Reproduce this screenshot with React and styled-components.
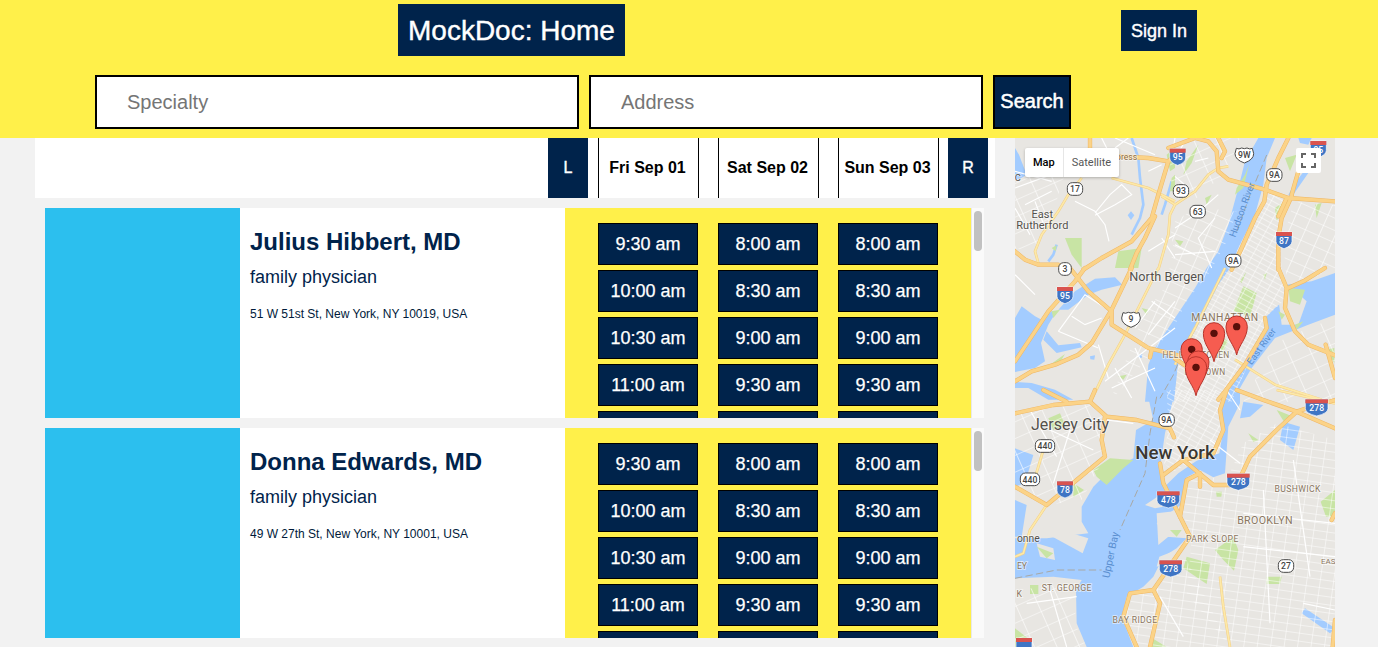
import React from 'react';
import styled, { createGlobalStyle } from 'styled-components';

const YELLOW = '#fff04a';
const NAVY = '#00234b';

const GlobalStyle = createGlobalStyle`
  html, body {
    margin: 0;
    height: 100%;
    overflow: hidden;
    background: #f2f2f2;
    font-family: "Liberation Sans", Arial, sans-serif;
  }
  * { box-sizing: border-box; }
`;

const Header = styled.header`
  background: ${YELLOW};
  height: 138px;
`;

const TitleRow = styled.div`
  display: flex;
  align-items: flex-start;
  padding-left: 398px;
`;

const Title = styled.h1`
  margin: 4px 0 0;
  height: 52px;
  background: ${NAVY};
  color: #fff;
  font-size: 28px;
  font-weight: 400;
  line-height: 54px;
  padding: 0 10px;
  -webkit-text-stroke: 0.4px #fff;
`;

const SignIn = styled.button`
  margin: 10px 0 0 496px;
  width: 76px;
  height: 41px;
  padding: 2px 0 0;
  border: 0;
  background: ${NAVY};
  color: #fff;
  font: 18px "Liberation Sans", Arial, sans-serif;
  -webkit-text-stroke: 0.4px #fff;
`;

const SearchRow = styled.form`
  display: flex;
  gap: 10px;
  margin-top: 19px;
  padding-left: 95px;
`;

const SearchInput = styled.input`
  width: ${(p) => p.$width}px;
  height: 54px;
  border: 2px solid #000;
  background: #fff;
  padding: 0 30px;
  font: 20px "Liberation Sans", Arial, sans-serif;
  &::placeholder { color: #757575; opacity: 1; }
`;

const SearchButton = styled.button`
  width: 78px;
  height: 54px;
  padding: 0 0 2px;
  border: 2px solid #000;
  background: ${NAVY};
  color: #fff;
  font: 20px "Liberation Sans", Arial, sans-serif;
  -webkit-text-stroke: 0.5px #fff;
`;

const Body = styled.main`
  display: flex;
  align-items: flex-start;
  padding-left: 35px;
`;

const Results = styled.section`
  width: 960px;
`;

const DateBar = styled.div`
  display: flex;
  justify-content: flex-end;
  height: 60px;
  padding-right: 7px;
  background: #fff;
`;

const ArrowButton = styled.button`
  width: 40px;
  padding: 0;
  border: 0;
  background: ${NAVY};
  color: #fff;
  font: 16px "Liberation Sans", Arial, sans-serif;
  -webkit-text-stroke: 0.4px #fff;
`;

const DateColumns = styled.div`
  display: flex;
  gap: 19px;
  margin: 0 9px 0 10px;
`;

const DateCell = styled.div`
  width: 101px;
  display: flex;
  align-items: center;
  justify-content: center;
  padding-right: 2px;
  border-left: 1px solid #000;
  border-right: 1px solid #000;
  font-size: 16px;
  font-weight: 700;
  color: #000;
`;

const Card = styled.article`
  display: flex;
  width: 939px;
  height: 210px;
  margin: 10px 0 0 10px;
`;

const Photo = styled.div`
  width: 195px;
  background: #2cbfee;
`;

const Info = styled.div`
  width: 325px;
  background: #fff;
  padding: 20px 10px 0;
  color: ${NAVY};
`;

const Name = styled.h2`
  margin: 0;
  font-size: 24px;
  line-height: 28px;
`;

const Specialty = styled.p`
  margin: 11px 0 0;
  font-size: 18px;
  line-height: 21px;
`;

const Address = styled.p`
  margin: 19px 0 0;
  font-size: 12px;
  line-height: 14px;
  color: #001a3a;
`;

const Slots = styled.div`
  width: 406px;
  overflow: hidden;
  background: ${YELLOW};
`;

const SlotGrid = styled.div`
  display: grid;
  grid-template-columns: repeat(3, 100px);
  column-gap: 20px;
  row-gap: 5px;
  padding: 15px 33px;
`;

const Slot = styled.button`
  height: 42px;
  padding: 0;
  border: 1px solid #000;
  background: ${NAVY};
  color: #fff;
  font: 18px "Liberation Sans", Arial, sans-serif;
  -webkit-text-stroke: 0.25px #fff;
`;

const ScrollTrack = styled.div`
  width: 13px;
  padding: 3px 2px 0 2px;
  background: #fafafa;
  border-left: 1px solid #e8e8e8;
`;

const ScrollThumb = styled.div`
  height: 40px;
  background: #c1c1c1;
  border-radius: 4px;
`;

const MapFrame = styled.aside`
  position: relative;
  flex: none;
  width: 320px;
  height: 509px;
  margin-left: 20px;
  overflow: hidden;
  background: #e8e6e2;
`;

const MapCanvas = styled.svg`
  display: block;
  width: 320px;
  height: 509px;
`;

const MapType = styled.div`
  position: absolute;
  top: 10px;
  left: 10px;
  display: flex;
  height: 29px;
  background: #fff;
  border-radius: 2px;
  box-shadow: 0 1px 3px rgba(0, 0, 0, 0.25);
  font: 11px Roboto, sans-serif;
`;

const MapTypeOption = styled.div`
  display: flex;
  align-items: center;
  padding: 0 8px;
  color: ${(p) => (p.$active ? '#000' : '#565656')};
  font-weight: ${(p) => (p.$active ? 500 : 400)};
  & + & { border-left: 1px solid #e6e6e6; }
`;

const Fullscreen = styled.div`
  position: absolute;
  top: 10px;
  right: 14px;
  width: 25px;
  height: 25px;
  display: flex;
  align-items: center;
  justify-content: center;
  background: #fff;
  border-radius: 2px;
`;

const MapLabel = styled.text`
  font-family: Roboto, sans-serif;
  font-size: ${(p) => p.$size}px;
  font-weight: ${(p) => p.$weight || 400};
  letter-spacing: ${(p) => p.$track || 0}px;
  fill: ${(p) => p.$color || '#54514c'};
  stroke: ${(p) => (p.$halo === false ? 'none' : 'rgba(255,255,255,0.6)')};
  stroke-width: 5px;
  paint-order: stroke;
  text-anchor: middle;
`;

const ShieldText = styled.text`
  font-family: Roboto, sans-serif;
  font-size: ${(p) => p.$size}px;
  font-weight: 500;
  fill: ${(p) => p.$color};
  text-anchor: middle;
`;

// the map is drawn at 3x, each sheet holds the points as read off one part of it
const OFFSETS = {
  top: [-15, -9],
  nw: [0, 0],
  ne: [480, 0],
  sw: [0, 390],
  se: [480, 390],
  bottom: [-15, 756],
};

const WATER = {
  top: [
    'M745 9 L795 9 L770 69 L760 149 L735 239 L685 339 L660 399 L625 449 L565 569 L505 679 L492 800 L405 800 L415 689 L435 639 L455 609 L495 549 L555 459 L590 399 L625 349 L655 269 L685 159 L705 79 Z',
    'M830 449 L905 439 L975 414 L975 539 L895 569 L795 609 L725 699 L690 759 L665 800 L640 800 L680 719 L745 619 L770 589 L765 549 L795 519 L825 494 Z',
  ],
  ne: ['M390 95 L400 105 L365 155 L350 178 L340 170 L360 135 Z', 'M370 0 L410 0 L400 20 L375 15 Z'],
  nw: ['M0 30 L12 50 L35 110 L10 125 L0 120 Z', 'M348 220 L358 232 L348 246 L338 232 Z'],
  sw: [
    'M0 150 L20 115 L60 145 L80 155 L110 130 L125 130 L100 170 L78 225 L90 280 L60 300 L0 312 Z',
    'M130 125 L180 70 L240 32 L300 28 L322 50 L260 65 L220 80 L160 125 Z',
    'M95 190 L130 232 L195 225 L200 238 L125 255 L85 215 Z',
    'M0 342 L50 345 L120 365 L175 395 L100 395 L40 360 L0 360 Z',
    'M225 265 L240 262 L238 275 L226 274 Z',
    'M370 260 L382 258 L380 270 L370 268 Z',
  ],
  bottom: [
    'M410 0 L495 0 L475 90 L465 130 L452 220 L462 292 L505 250 L560 212 L628 190 L640 120 L628 60 L640 0 L690 0 L690 40 L655 110 L645 250 L610 262 L570 240 L530 262 L512 345 L470 375 L440 400 L470 440 L530 445 L500 475 L460 500 L430 560 L400 590 L350 620 L335 680 L370 771 L230 771 L200 700 L198 600 L215 570 L130 560 L15 565 L15 445 L110 445 L235 430 L215 395 L215 350 L250 290 L300 240 L370 205 L378 120 L430 90 Z',
    'M15 175 L70 195 L45 280 L15 290 Z',
    'M15 330 L50 345 L35 440 L15 440 Z',
    'M700 35 L760 45 L720 80 L690 85 Z',
    'M820 95 L870 110 L850 180 L810 150 Z',
    'M885 655 L975 715 L960 730 L875 670 Z',
  ],
};

const RIVERS = {
  nw: ['M350 0 L370 60 L375 120 L385 200 L375 240 L350 290', 'M470 130 L450 200 L440 230', 'M125 320 L115 350 L100 370'],
};

const LAND_OVER_WATER = {
  se: ['M310 90 L350 60 L395 100 L370 170 L320 170 Z'],
  bottom: [
    'M405 345 L465 305 L510 312 L490 345 L435 355 Z',
    'M440 370 L505 362 L530 430 L475 440 L445 465 Z',
    'M102 405 L235 445 L218 490 L100 425 Z',
    'M80 460 L130 475 L135 510 L90 500 Z',
    'M448 500 L500 480 L470 520 L440 530 Z',
  ],
};

const PARKS = {
  nw: [
    'M310 340 L380 330 L370 390 L300 390 Z',
    'M150 300 L200 300 L200 390 L170 350 Z',
    'M455 50 L480 30 L480 90 L465 100 Z',
    'M470 120 L480 110 L480 160 L465 160 Z',
    'M110 330 L125 322 L122 340 Z',
  ],
  ne: [
    'M35 70 L70 20 L50 75 L25 110 Z',
    'M185 150 L210 110 L222 80 L205 150 L180 170 Z',
    'M90 180 L110 170 L95 200 Z',
    'M420 200 L440 195 L425 240 Z',
    'M300 210 L330 190 L305 250 Z',
    'M330 60 L365 50 L345 100 Z',
    'M0 305 L25 310 L15 325 Z',
  ],
  sw: ['M105 290 L150 258 L130 292 Z', 'M310 325 L335 320 L325 335 Z', 'M380 120 L400 125 L395 140 Z', 'M110 130 L135 125 L115 150 Z'],
  se: [
    'M185 105 L205 55 L245 75 L225 145 L175 130 Z',
    'M130 200 L160 220 L140 260 Z',
    'M265 20 L275 15 L270 35 Z',
    'M195 40 L215 10 L200 45 Z',
    'M310 130 L330 140 L320 155 Z',
    'M340 60 L390 65 L375 110 L345 100 Z',
    'M360 170 L385 160 L365 185 Z',
    'M450 245 L478 240 L478 285 Z',
  ],
  bottom: [
    'M250 240 L300 205 L370 210 L340 235 L290 285 L260 260 Z',
    'M530 500 L600 520 L590 582 L520 535 Z',
    'M615 480 L670 440 L685 480 L672 542 L640 510 Z',
    'M715 130 L745 150 L730 156 Z',
    'M800 60 L850 80 L820 92 Z',
    'M770 560 L815 560 L810 582 L770 582 Z',
    'M932 335 L975 300 L975 380 L948 380 Z',
    'M480 420 L515 420 L500 440 Z',
    'M60 585 L85 585 L85 612 L60 612 Z',
    'M15 715 L60 750 L20 771 L15 771 Z',
    'M115 85 L150 70 L165 105 L130 120 Z',
    'M190 280 L222 300 L190 322 Z',
    'M420 740 L470 771 L420 771 Z',
    'M80 470 L130 490 L110 505 Z',
    'M618 305 L636 305 L634 320 L620 320 Z',
  ],
};

const GRIDS = {
  top: [
    ['M770 170 L735 239 L685 339 L625 449 L565 569 L505 679 L492 800 L665 800 L745 619 L770 589 L765 549 L825 494 L812 370 L818 190 Z', 'url(#gridManhattan)'],
    ['M850 200 L975 210 L975 400 L905 430 L830 440 L820 320 Z', 'url(#gridBronx)'],
    ['M700 800 L795 625 L895 580 L975 550 L975 800 Z', 'url(#gridLoose)'],
    ['M300 800 L440 640 L500 560 L530 500 L600 410 L650 320 L680 230 L560 215 L480 270 L490 340 L470 450 L400 540 Z', 'url(#gridBronx)'],
    ['M15 130 L170 100 L120 260 L70 350 L15 340 Z', 'url(#gridLoose)'],
    ['M500 10 L690 10 L650 110 L560 190 L470 130 Z', 'url(#gridLoose)'],
  ],
  bottom: [
    ['M470 0 L640 0 L625 190 L555 212 L490 245 L462 220 L475 100 Z', 'url(#gridManhattan)'],
    ['M540 250 L650 270 L700 160 L800 100 L975 150 L975 771 L660 771 L530 610 L545 450 L515 360 Z', 'url(#gridBrooklyn)'],
    ['M15 60 L270 40 L290 190 L215 330 L110 345 L15 290 Z', 'url(#gridLoose)'],
    ['M375 610 L435 600 L525 500 L660 771 L380 771 L340 680 Z', 'url(#gridBrooklyn)'],
    ['M15 600 L200 580 L195 700 L230 771 L15 771 Z', 'url(#gridLoose)'],
  ],
};

const STREETS = {
  nw: [
    'M180 190 L240 220 L270 260 L282 310',
    'M240 225 L285 170 L320 140 L350 170 L300 200 L240 232',
    'M0 100 L110 130',
    'M0 150 L150 95',
    'M30 200 L110 160',
    'M0 210 L45 290',
    'M60 190 L90 270',
    'M300 0 L420 50',
    'M260 0 L290 60',
    'M400 100 L440 80',
    'M300 30 L340 0',
    'M440 300 L480 360',
    'M400 340 L480 290',
    'M470 60 L480 0',
  ],
  ne: ['M0 270 L60 230 L130 170', 'M0 320 L60 350', 'M30 10 L0 60', 'M60 70 L100 60', 'M0 115 L40 150', 'M120 240 L70 300 L110 390', 'M0 350 L120 340'],
  sw: [
    'M130 190 L210 80 L280 125',
    'M170 145 L210 170 L260 150',
    'M130 190 L250 240',
    'M250 230 L280 330',
    'M270 340 L480 180',
    'M300 300 L350 390',
    'M360 240 L420 370',
    'M410 100 L480 150',
    'M420 100 L360 180',
    'M0 20 L60 80',
    'M290 360 L420 300',
    'M400 200 L480 100',
  ],
  bottom: [
    'M120 120 L250 180',
    'M60 60 L140 200',
    'M180 120 L130 280',
    'M290 90 L370 100',
    'M700 370 L975 400',
    'M975 500 L700 470',
    'M760 300 L780 700',
    'M850 210 L900 560',
    'M450 620 L520 740',
    'M50 640 L200 620',
    'M120 600 L170 771',
    'M650 0 L690 60',
    'M600 150 L690 220',
    'M880 640 L975 660',
  ],
};

const MAJOR_ROADS = {
  nw: [
    'M310 55 L400 60 L460 70 L480 50',
    'M460 70 L430 170 L410 240 L350 310 L260 360 L205 395',
    'M420 235 L390 300 L365 345 L345 395',
    'M0 340 L30 365 L70 380 L130 380 L165 395',
    'M225 0 L225 30',
  ],
  ne: [
    'M-20 30 L60 0 L100 10 L125 40 L130 100 L160 125 L270 155 L340 180 L480 190',
    'M340 0 L310 60 L275 140 L268 190 L240 240 L200 330 L170 395',
    'M350 175 L320 240 L310 300 L310 395',
    'M335 180 L310 235',
    'M370 100 L350 170',
    'M130 0 L150 40 L140 60',
  ],
  sw: [
    'M0 340 L50 310 L120 290 L190 260 L230 225 L290 125 L350 0',
    'M0 280 L60 190 L100 130 L180 40 L210 0',
    'M165 0 L220 70 L290 130 L290 170 L400 240 L490 262',
    'M405 268 L410 245',
  ],
  se: [
    'M310 0 L335 60 L330 120 L360 190 L400 230 L480 262',
    'M340 60 L385 40 L450 0',
    'M452 230 L480 330',
    'M270 150 L275 180 L210 290 L150 370 L130 395',
    'M0 272 L30 292',
  ],
  bottom: [
    'M15 70 L130 45 L240 35 L290 80 L380 90 L480 115 L492 142',
    'M100 0 L170 35 M240 35 L255 0',
    'M285 80 L275 150 L285 200 L200 270 L110 345 L15 290',
    'M650 0 L630 60 L640 120 L610 190 L520 210 L460 255',
    'M450 220 L460 280 L540 440',
    'M520 210 L580 260 L610 285 L680 285 L720 200 L800 120 L860 65 L975 115',
    'M680 0 L760 30 L860 65 L890 55 L975 30',
    'M510 380 L530 270 L570 250 L570 290',
    'M540 440 L430 600 L360 610 L340 680 L380 771',
    'M430 600 L450 640 L420 771',
    'M975 370 L965 390 M975 690 L968 771',
  ],
};

const MINOR_ROADS = {
  nw: [
    'M200 120 L160 170 L130 220 L80 290 L60 340 L70 375',
    'M290 120 L400 150 L480 190',
    'M430 395 L460 290 L465 230 L480 200',
  ],
  ne: ['M0 200 L60 160 L100 110 L130 90 L160 85', 'M-40 175 L0 200'],
  sw: ['M230 395 L280 290 L330 200 L400 60 L430 0'],
  se: ['M150 0 L100 100 L60 180 L0 290', 'M180 275 L300 350 L440 395'],
  bottom: ['M110 345 L60 420 L40 490 L15 500', 'M100 180 L70 280', 'M800 0 L975 40', 'M630 560 L640 650 L660 771'],
};

const DASHES = {
  top: ['M770 60 L720 180 L680 290', 'M540 600 L490 720 L450 790'],
  bottom: ['M440 20 L420 130 L405 250 L330 420', 'M15 565 L140 540 L275 540'],
};

const INTERSTATES = {
  top: [[503, 65, '95'], [165, 480, '95'], [822, 315, '87'], [925, 42, '95']],
  bottom: [[165, 298, '78'], [475, 328, '478'], [685, 275, '278'], [482, 535, '278'], [920, 52, '278'], [42, 768, '']],
};

const STATE_ROUTES = {
  top: [[793, 120, '9A'], [670, 377, '9A'], [195, 162, '17'], [513, 168, '93'], [563, 230, '63'], [165, 402, '3']],
  bottom: [[470, 90, '9A'], [105, 168, '440'], [60, 268, '440'], [828, 528, '27']],
};

const US_ROUTES = [[703, 60, '9W'], [363, 553, '9']];

const PINS = [
  [680, 575],
  [612, 595],
  [545, 643],
  [565, 680],
  [558, 697],
];

const Layer = ({ sheet, ...attrs }) =>
  Object.entries(sheet).map(([name, paths]) => (
    <g key={name} transform={`translate(${OFFSETS[name].join(' ')})`}>
      {paths.map((d) => <path key={d} d={d} {...attrs} />)}
    </g>
  ));

const GridLayer = ({ sheet }) =>
  Object.entries(sheet).map(([name, shapes]) => (
    <g key={name} transform={`translate(${OFFSETS[name].join(' ')})`}>
      {shapes.map(([d, fill]) => <path key={d} d={d} fill={fill} />)}
    </g>
  ));

const Interstate = ({ x, y, label }) => {
  const w = label.length > 2 ? 34 : 24;
  return (
    <g transform={`translate(${x} ${y})`}>
      <path d={`M${-w} -24 H${w} V4 Q${w} 18 0 26 Q${-w} 18 ${-w} 4 Z`} fill="#3f75c4" stroke="#fff" strokeWidth="2" />
      <path d={`M${-w} -24 H${w} V-12 H${-w} Z`} fill="#d9534f" />
      <ShieldText x="0" y="11" $size="26" $color="#fff">{label}</ShieldText>
    </g>
  );
};

const StateRoute = ({ x, y, label }) => {
  const w = label.length > 2 ? 29 : label.length > 1 ? 23 : 19;
  return (
    <g transform={`translate(${x} ${y})`}>
      <rect x={-w} y="-19" width={w * 2} height="38" rx="15" fill="#fff" stroke="#4a4a4a" strokeWidth="3" />
      <ShieldText x="0" y="10" $size="26" $color="#444">{label}</ShieldText>
    </g>
  );
};

const UsRoute = ({ x, y, label }) => (
  <g transform={`translate(${x} ${y})`}>
    <path d="M-24 -20 Q-16 -16 -8 -21 Q0 -17 8 -21 Q16 -16 24 -20 L28 -4 Q28 14 0 24 Q-28 14 -28 -4 Z" fill="#fff" stroke="#4a4a4a" strokeWidth="3" />
    <ShieldText x="0" y="9" $size="26" $color="#444">{label}</ShieldText>
  </g>
);

const Pin = ({ x, y }) => (
  <g transform={`translate(${x} ${y})`}>
    <path d="M0 85 C-6 55 -32 35 -32 0 A32 32 0 1 1 32 0 C32 35 6 55 0 85 Z" fill="#f65c50" stroke="#b8352c" strokeWidth="3" />
    <circle r="11" fill="#5a0f0a" />
  </g>
);

const BROWN = '#8a7660';
const RIVER_TEXT = '#5a8fd0';

const CityMap = () => (
  <MapCanvas viewBox="0 0 320 509">
    <defs>
      <pattern id="gridManhattan" width="30" height="15" patternUnits="userSpaceOnUse" patternTransform="rotate(29)">
        <path d="M0 0 V15 M0 0 H30" stroke="#fff" strokeWidth="3" fill="none" />
      </pattern>
      <pattern id="gridBrooklyn" width="40" height="24" patternUnits="userSpaceOnUse" patternTransform="rotate(8)">
        <path d="M0 0 V24 M0 0 H40" stroke="#fff" strokeWidth="3" fill="none" />
      </pattern>
      <pattern id="gridBronx" width="44" height="34" patternUnits="userSpaceOnUse" patternTransform="rotate(24)">
        <path d="M0 0 V34 M0 0 H44" stroke="#fff" strokeWidth="3.5" fill="none" />
      </pattern>
      <pattern id="gridLoose" width="62" height="46" patternUnits="userSpaceOnUse" patternTransform="rotate(-24)">
        <path d="M0 0 V46 M0 0 H62" stroke="#fff" strokeWidth="3.5" fill="none" />
      </pattern>
    </defs>
    <g transform="scale(.33333)">
      <Layer sheet={WATER} fill="#a3ccff" />
      <Layer sheet={RIVERS} fill="none" stroke="#a3ccff" strokeWidth="8" strokeLinejoin="round" />
      <Layer sheet={LAND_OVER_WATER} fill="#e8e6e2" />
      <Layer sheet={PARKS} fill="#c8e4a4" />
      <GridLayer sheet={GRIDS} />
      <Layer sheet={STREETS} fill="none" stroke="#fff" strokeWidth="3.5" />
      <Layer sheet={DASHES} fill="none" stroke="#a8a8a4" strokeWidth="3" strokeDasharray="22 10" />
      <Layer sheet={MINOR_ROADS} fill="none" stroke="#f3cf86" strokeWidth="8" strokeLinejoin="round" />
      <Layer sheet={MINOR_ROADS} fill="none" stroke="#fde9a8" strokeWidth="5" strokeLinejoin="round" />
      <Layer sheet={MAJOR_ROADS} fill="none" stroke="#efb765" strokeWidth="13" strokeLinejoin="round" strokeLinecap="round" />
      <Layer sheet={MAJOR_ROADS} fill="none" stroke="#fbd388" strokeWidth="10" strokeLinejoin="round" strokeLinecap="round" />

      <g transform="translate(-15 -9)">
        <MapLabel x="350" y="76" $size="26" $color="#8a6a45">press</MapLabel>
        <MapLabel x="23" y="137" $size="28">C</MapLabel>
        <MapLabel x="97" y="250" $size="33">East</MapLabel>
        <MapLabel x="97" y="283" $size="33">Rutherford</MapLabel>
        <MapLabel x="470" y="439" $size="38">North Bergen</MapLabel>
        <MapLabel x="645" y="558" $size="31" $track="1.5" $color={BROWN}>MANHATTAN</MapLabel>
        <MapLabel x="558" y="668" $size="25" $track="1" $color={BROWN}>HELL'S KITCHEN</MapLabel>
        <MapLabel x="585" y="720" $size="25" $track="1" $color={BROWN}>MIDTOWN</MapLabel>
        <MapLabel x="0" y="0" $size="29" $color={RIVER_TEXT} $halo={false} transform="translate(705 228) rotate(-70)">Hudson River</MapLabel>
        <MapLabel x="0" y="0" $size="29" $color={RIVER_TEXT} $halo={false} transform="translate(762 640) rotate(-54)">East River</MapLabel>

        <g transform="translate(0 765)">
          <MapLabel x="180" y="119" $size="48">Jersey City</MapLabel>
          <MapLabel x="495" y="208" $size="56" $weight="500" $color="#3b3731">New York</MapLabel>
          <MapLabel x="863" y="306" $size="26" $track="1" $color={BROWN}>BUSHWICK</MapLabel>
          <MapLabel x="765" y="401" $size="32" $track="1" $color={BROWN}>BROOKLYN</MapLabel>
          <MapLabel x="607" y="456" $size="26" $track="1" $color={BROWN}>PARK SLOPE</MapLabel>
          <MapLabel x="170" y="604" $size="26" $track="1" $color={BROWN}>ST. GEORGE</MapLabel>
          <MapLabel x="375" y="699" $size="26" $track="1" $color={BROWN}>BAY RIDGE</MapLabel>
          <MapLabel x="55" y="455" $size="31">onne</MapLabel>
          <MapLabel x="36" y="538" $size="26" $color={BROWN}>EY</MapLabel>
          <MapLabel x="28" y="620" $size="26" $color={BROWN}>K</MapLabel>
          <MapLabel x="955" y="522" $size="24" $color={BROWN}>EAS</MapLabel>
          <MapLabel x="0" y="0" $size="31" $color={RIVER_TEXT} $halo={false} transform="translate(312 497) rotate(-78)">Upper Bay</MapLabel>
        </g>

        {INTERSTATES.top.map(([x, y, label]) => <Interstate key={`${x}-${y}`} x={x} y={y} label={label} />)}
        {STATE_ROUTES.top.map(([x, y, label]) => <StateRoute key={`${x}-${y}`} x={x} y={y} label={label} />)}
        {US_ROUTES.map(([x, y, label]) => <UsRoute key={`${x}-${y}`} x={x} y={y} label={label} />)}
        <g transform="translate(0 765)">
          {INTERSTATES.bottom.map(([x, y, label]) => <Interstate key={`${x}-${y}`} x={x} y={y} label={label} />)}
          {STATE_ROUTES.bottom.map(([x, y, label]) => <StateRoute key={`${x}-${y}`} x={x} y={y} label={label} />)}
        </g>

        {PINS.map(([x, y]) => <Pin key={`${x}-${y}`} x={x} y={y} />)}
      </g>
    </g>
  </MapCanvas>
);

const formatTime = (minutes) => {
  const h = Math.floor(minutes / 60);
  const m = String(minutes % 60).padStart(2, '0');
  return `${h > 12 ? h - 12 : h}:${m} ${h >= 12 ? 'pm' : 'am'}`;
};

const rows = [0, 1, 2, 3, 4];
const slotTimes = rows.flatMap((i) => [570 + i * 30, 480 + i * 30, 480 + i * 30]);

const doctors = [
  { name: 'Julius Hibbert, MD', specialty: 'family physician', address: '51 W 51st St, New York, NY 10019, USA' },
  { name: 'Donna Edwards, MD', specialty: 'family physician', address: '49 W 27th St, New York, NY 10001, USA' },
];

const App = () => (
  <>
    <GlobalStyle />
    <Header>
      <TitleRow>
        <Title>MockDoc: Home</Title>
        <SignIn type="button">Sign In</SignIn>
      </TitleRow>
      <SearchRow onSubmit={(e) => e.preventDefault()}>
        <SearchInput $width={484} placeholder="Specialty" />
        <SearchInput $width={394} placeholder="Address" />
        <SearchButton>Search</SearchButton>
      </SearchRow>
    </Header>
    <Body>
      <Results>
        <DateBar>
          <ArrowButton>L</ArrowButton>
          <DateColumns>
            <DateCell>Fri Sep 01</DateCell>
            <DateCell>Sat Sep 02</DateCell>
            <DateCell>Sun Sep 03</DateCell>
          </DateColumns>
          <ArrowButton>R</ArrowButton>
        </DateBar>
        {doctors.map((d) => (
          <Card key={d.name}>
            <Photo />
            <Info>
              <Name>{d.name}</Name>
              <Specialty>{d.specialty}</Specialty>
              <Address>{d.address}</Address>
            </Info>
            <Slots>
              <SlotGrid>
                {slotTimes.map((t, i) => <Slot key={i}>{formatTime(t)}</Slot>)}
              </SlotGrid>
            </Slots>
            <ScrollTrack>
              <ScrollThumb />
            </ScrollTrack>
          </Card>
        ))}
      </Results>
      <MapFrame>
        <CityMap />
        <MapType>
          <MapTypeOption $active>Map</MapTypeOption>
          <MapTypeOption>Satellite</MapTypeOption>
        </MapType>
        <Fullscreen>
          <svg width="15" height="15" viewBox="0 0 15 15" fill="none" stroke="#666" strokeWidth="2">
            <path d="M1 5 V1 H5 M10 1 H14 V5 M14 10 V14 H10 M5 14 H1 V10" />
          </svg>
        </Fullscreen>
      </MapFrame>
    </Body>
  </>
);

export default App;
